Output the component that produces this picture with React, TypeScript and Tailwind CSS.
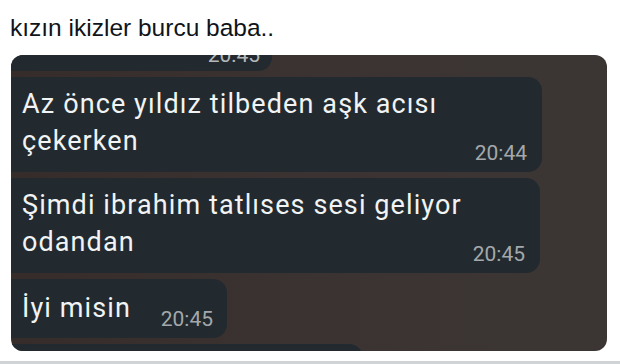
const chat = "font-['Roboto',sans-serif]"

function Time({ children, className = "" }: { children: string; className?: string }) {
  return (
    <span className={`text-[21px] leading-[24px] text-[#a4a8ab] whitespace-nowrap ${className}`}>
      {children}
    </span>
  )
}

const msg = "text-[27px] leading-[37px] tracking-[1.1px] text-[#f1f3f4]"

export default function App() {
  return (
    <div className="w-[620px] h-[364px] bg-white flex flex-col overflow-hidden">
      <p className="pt-[14px] pl-[10px] text-[24.5px] leading-[28px] text-[#0f1419] font-['Liberation_Sans',Arial,sans-serif]">
        kızın ikizler burcu baba..
      </p>

      {/* photo of the chat */}
      <div
        className={`mt-[13px] ml-[11px] w-[596px] h-[296px] shrink-0 rounded-[12px] overflow-hidden bg-gradient-to-r from-[#362d2b] via-[#3b3331] to-[#3b3634] flex flex-col gap-[6px] ${chat}`}
      >
        <div className="-mt-[30px] w-[261px] h-[46px] shrink-0 bg-[#222a2f] rounded-br-[14px] flex items-end justify-end pr-[12px] pb-[4px]">
          <Time className="text-[#b4b8bb]">20:45</Time>
        </div>

        <div className="w-[531px] shrink-0 bg-[#222a2f] rounded-r-[14px] flex items-end pl-[11px] pr-[15px] pt-[9px] pb-[7px]">
          <p className={`flex-1 mb-[5px] ${msg}`}>
            Az önce yıldız tilbeden aşk acısı
            <br />
            çekerken
          </p>
          <Time>20:44</Time>
        </div>

        <div className="w-[529px] shrink-0 bg-[#222a2f] rounded-r-[14px] flex items-end pl-[11px] pr-[15px] pt-[9px] pb-[7px]">
          <p className={`flex-1 mb-[5px] ${msg}`}>
            Şimdi ibrahim tatlıses sesi geliyor
            <br />
            odandan
          </p>
          <Time>20:45</Time>
        </div>

        <div className="w-[216px] shrink-0 bg-[#222a2f] rounded-r-[14px] flex items-end justify-between pl-[11px] pr-[14px] pt-[11px] pb-[7px]">
          <p className={`mb-[4px] ${msg}`}>İyi misin</p>
          <Time>20:45</Time>
        </div>

        <div className="w-[352px] h-[40px] shrink-0 bg-[#222a2f] rounded-tr-[14px]" />
      </div>

      <div className="mt-[10px] h-[3px] bg-[#cfd3d6]" />
    </div>
  )
}
